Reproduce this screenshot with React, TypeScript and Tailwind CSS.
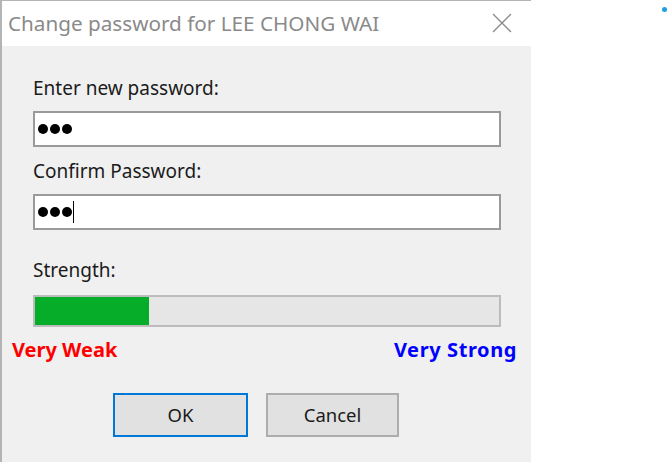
import { FC } from "react"

const Dots: FC<{ caret?: boolean }> = ({ caret }) => (
  <div className="flex items-center gap-[2px] pl-[3px]">
    <span className="w-[10px] h-[10px] rounded-full bg-black" />
    <span className="w-[10px] h-[10px] rounded-full bg-black" />
    <span className="w-[10px] h-[10px] rounded-full bg-black" />
    {caret && <span className="w-px h-[22px] bg-black -ml-[1px]" />}
  </div>
)

const Field: FC<{ label: string; caret?: boolean; top: string }> = ({ label, caret, top }) => (
  <div className={`flex flex-col ${top}`}>
    <div className="h-[24px] leading-[24px] text-[19px] text-[#1b1b1b]">{label}</div>
    <div className="mt-[11px] h-[36px] w-[468px] border-2 border-[#9a9a9a] bg-white flex items-center">
      <Dots caret={caret} />
    </div>
  </div>
)

export default function App() {
  return (
    <div className="flex w-[669px] h-[462px] bg-white overflow-hidden" style={{ fontFamily: "'Noto Sans', 'Open Sans', sans-serif" }}>
      <div className="flex flex-col w-[531px] h-full border-l-2 border-t border-[#b4b4b4]">
        <header className="h-[45px] bg-white flex items-center justify-between pl-[6px] pr-[18px]">
          <span className="text-[20.7px] text-[#8a8a8a]">Change password for LEE CHONG WAI</span>
          <svg width="22" height="22" viewBox="0 0 22 22" className="mb-[2px]">
            <path d="M2 2 L20 20 M20 2 L2 20" stroke="#8a8a8a" strokeWidth="1.3" fill="none" />
          </svg>
        </header>
        <main className="flex flex-col grow bg-[#f0f0f0] pl-[31px]">
          <Field label="Enter new password:" top="mt-[30px]" />
          <Field label="Confirm Password:" top="mt-[12px]" caret />
          <div className="mt-[28px] h-[24px] leading-[24px] text-[19px] text-[#1b1b1b]">Strength:</div>
          <div className="mt-[13px] h-[32px] w-[468px] border-2 border-[#bcbcbc] bg-[#e6e6e6] flex">
            <div className="w-[114px] h-full bg-[#05ad29]" />
          </div>
          <div className="flex justify-between items-center w-[505px] -ml-[21px] mt-[10px] h-[26px] font-bold text-[20px]">
            <span className="text-[#ff0000]">Very Weak</span>
            <span className="text-[#0000ff] tracking-[0.6px]">Very Strong</span>
          </div>
          <div className="flex gap-[18px] ml-[80px] mt-[30px]">
            <button className="w-[135px] h-[44px] border-2 border-[#0078d7] bg-[#e1e1e1] text-[18.5px] text-[#1b1b1b]">OK</button>
            <button className="w-[133px] h-[44px] border-2 border-[#adadad] bg-[#e1e1e1] text-[18.5px] text-[#1b1b1b]">Cancel</button>
          </div>
        </main>
      </div>
      <div className="grow flex justify-end items-start pt-[7px] pr-[2px]">
        <span className="w-[5px] h-[5px] rounded-full bg-[#1ba1e2]" />
      </div>
    </div>
  )
}
